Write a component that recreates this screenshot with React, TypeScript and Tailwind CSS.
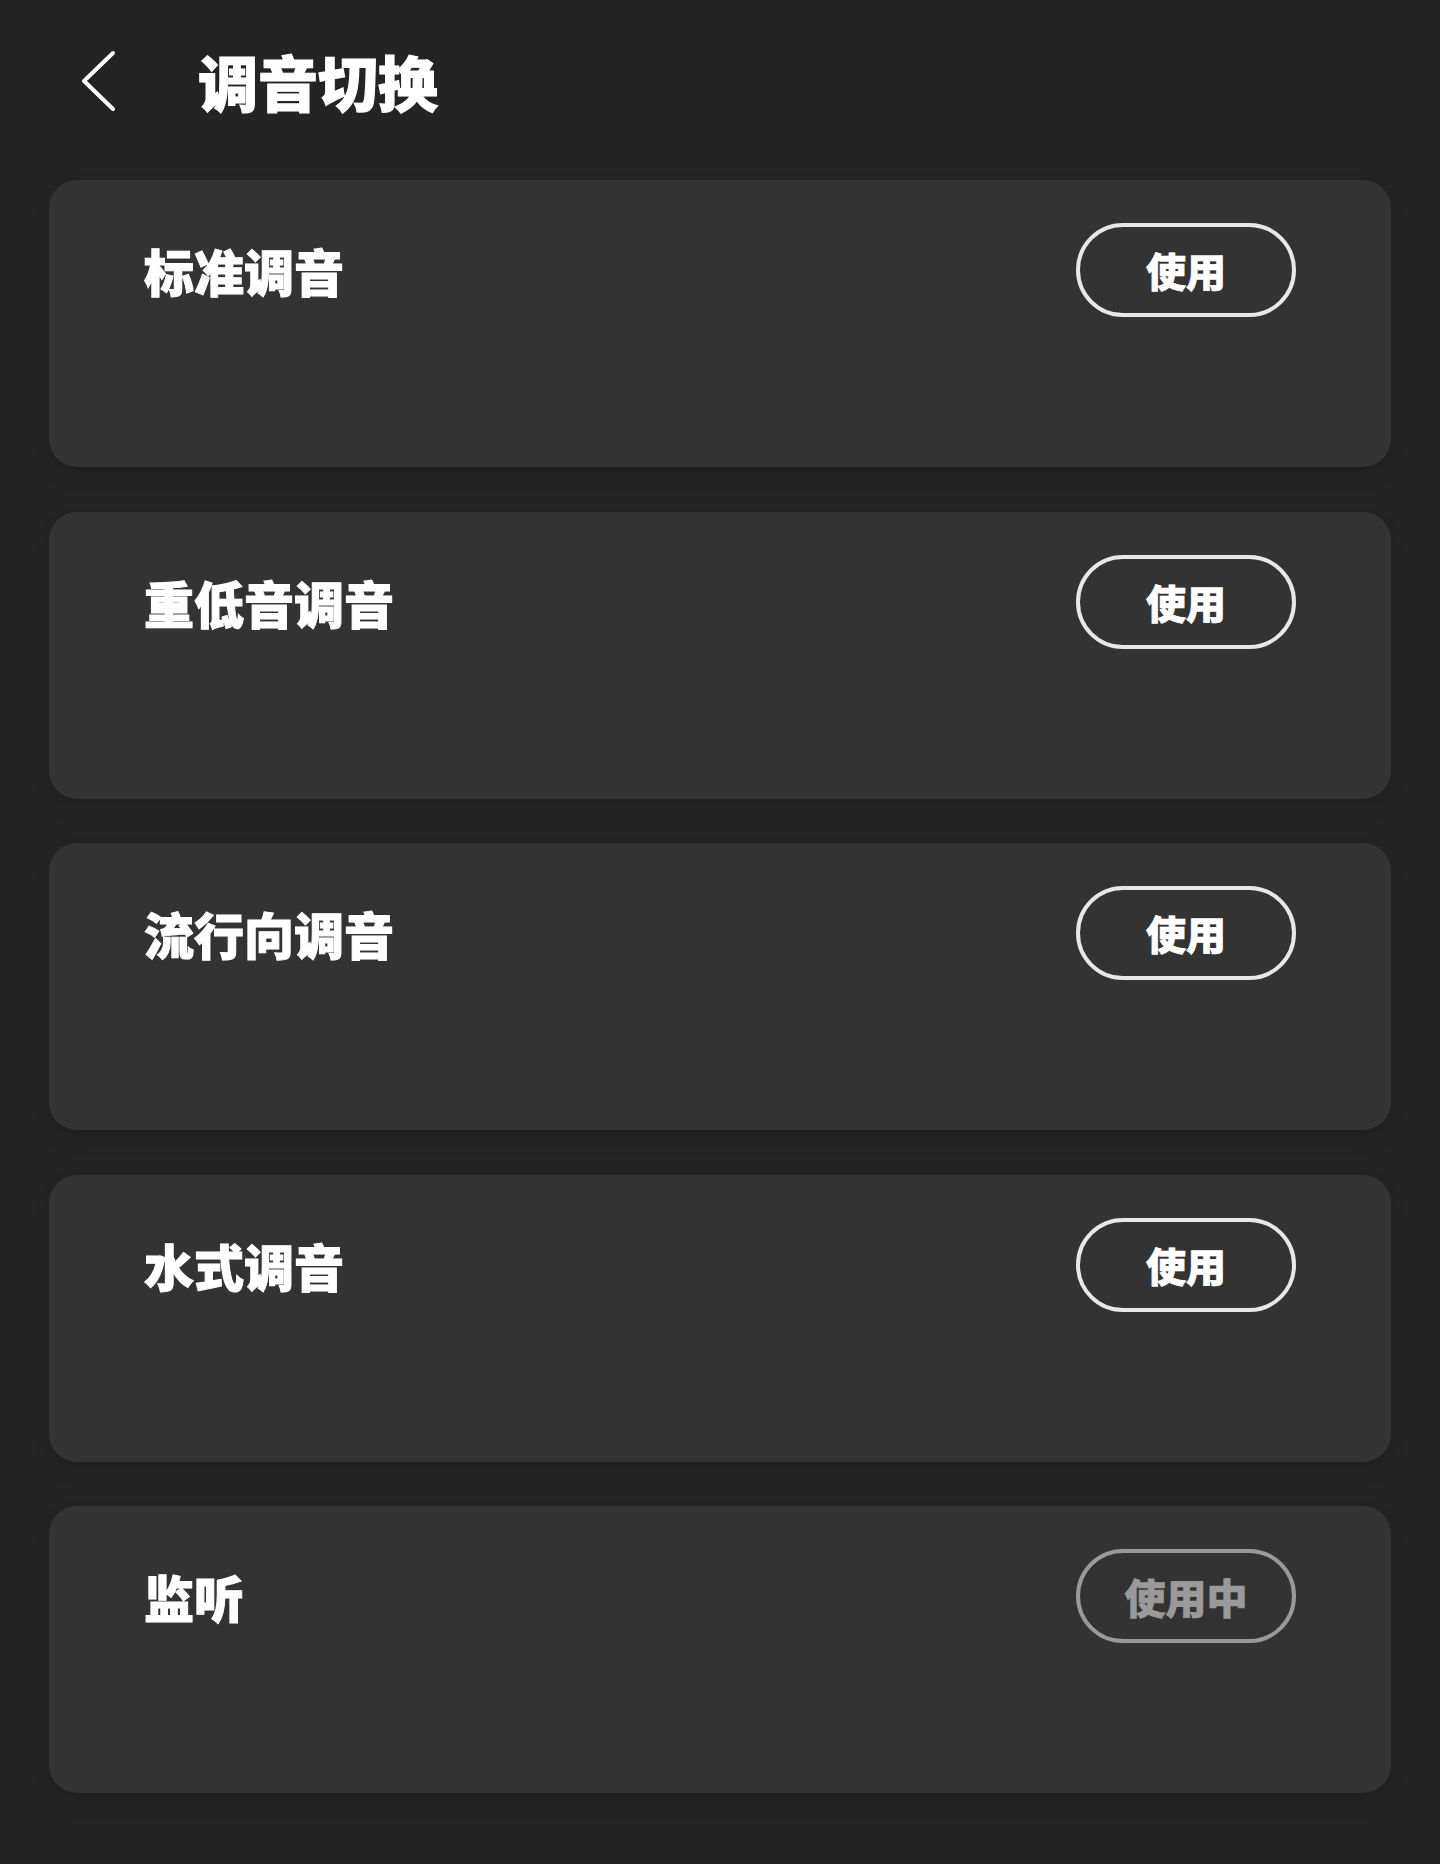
import React from "react";

const presets = [
  { name: "标准调音", active: false },
  { name: "重低音调音", active: false },
  { name: "流行向调音", active: false },
  { name: "水式调音", active: false },
  { name: "监听", active: true },
];

const cjk = { fontFamily: '"Noto Sans CJK SC", "Noto Sans", sans-serif' };

export default function App() {
  return (
    <div className="min-h-[1864px] w-full bg-[#242424] text-white" style={cjk}>
      <header className="flex h-[162px] items-center pl-[80px]">
        <svg width="36" height="64" viewBox="0 0 36 64" fill="none">
          <polyline
            points="33,4 4,32 33,60"
            stroke="white"
            strokeWidth="4"
            strokeLinecap="round"
            strokeLinejoin="round"
          />
        </svg>
        <h1 className="ml-[82px] text-[60px] font-black leading-none [-webkit-text-stroke:1.2px_currentColor]">
          调音切换
        </h1>
      </header>

      <main className="flex flex-col gap-[44.5px] px-[49px] pt-[18px]">
        {presets.map((p) => (
          <div
            key={p.name}
            className="h-[287px] rounded-[28px] bg-[#333333] px-[95px] pt-[43px] shadow-[0_10px_18px_rgba(0,0,0,0.12)]"
          >
            <div className="flex items-center justify-between">
              <span className="text-[50px] font-black leading-none [-webkit-text-stroke:1px_currentColor]">
                {p.name}
              </span>
              <button
                className={
                  p.active
                    ? "flex h-[94px] w-[220px] items-center justify-center rounded-full border-[4px] border-[#9a9a9a] text-[41px] font-black leading-none text-[#9a9a9a] [-webkit-text-stroke:0.7px_currentColor]"
                    : "flex h-[94px] w-[220px] items-center justify-center rounded-full border-[4px] border-[#e8e8e8] text-[40px] font-black leading-none text-white [-webkit-text-stroke:0.7px_currentColor]"
                }
              >
                {p.active ? "使用中" : "使用"}
              </button>
            </div>
          </div>
        ))}
      </main>
    </div>
  );
}
